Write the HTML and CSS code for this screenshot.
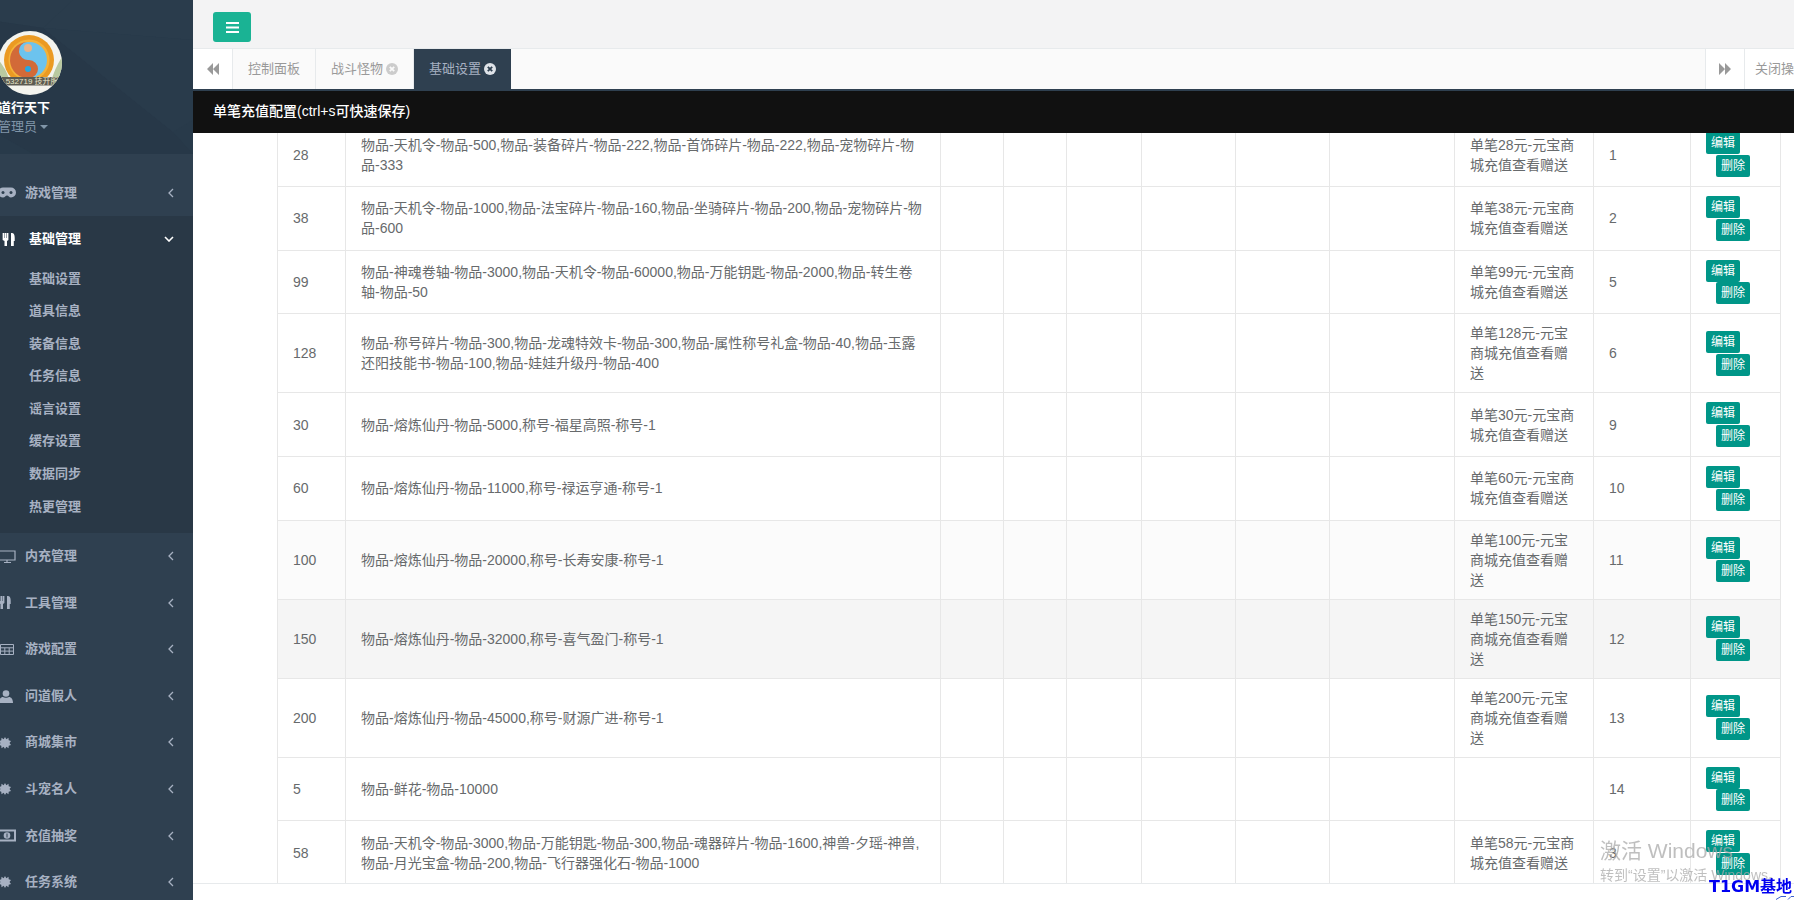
FILE: index.html
```html
<!DOCTYPE html>
<html lang="zh-CN">
<head>
    <meta charset="UTF-8">
    <meta name="viewport" content="width=device-width, initial-scale=1.0">
    <title>单笔充值配置</title>
    <link rel="stylesheet" href="styles.css">
</head>
<body>
    <svg class="icon-defs" width="0" height="0">
        <symbol id="chev-left" viewBox="0 0 6 10"><path d="M5 1 1 5l4 4" fill="none" stroke="currentColor" stroke-width="1.3"/></symbol>
        <symbol id="chev-down" viewBox="0 0 10 6"><path d="M1 1l4 4 4-4" fill="none" stroke="currentColor" stroke-width="1.6"/></symbol>
        <symbol id="burst" viewBox="0 0 12 12"><path d="M6 0l1.300 2.300L9.500 .8l.2 2.500 2.300.7-1.500 2 1.500 2-2.300.7-.2 2.500-2.200-1.500L6 12l-1.300-2.300-2.200 1.500-.2-2.500L0 8l1.500-2L0 4l2.300-.7.2-2.500 2.200 1.500z" fill="currentColor"/></symbol>
        <symbol id="cutlery" viewBox="0 0 18 14"><path d="M0 0h1.700v5.500h.5V0h1.800v5.500h.5V0h1.700v7.500L4.700 8.500V14H2V8.500L0 7.500zM9 0h1c2 0 3 2 3 5v3.500h-1V14H9z" fill="currentColor"/></symbol>
        <symbol id="close" viewBox="0 0 12 12"><circle cx="6" cy="6" r="6" fill="currentColor"/><path d="M3.800 3.800l4.400 4.400M8.200 3.800 3.800 8.200" stroke="var(--x)" stroke-width="1.800"/></symbol>
    </svg>

    <aside class="sidebar">
        <div class="sidebar-inner">
            <div class="nav-header">
                <svg class="header-bg" viewBox="0 0 220 154" preserveAspectRatio="none">
                    <rect width="220" height="154" fill="#283a4a"/>
                    <polygon points="0,0 100,0 70,28 0,18" fill="#2a3c4c"/>
                    <polygon points="70,28 100,0 220,0 220,40" fill="#2a3c4c"/>
                    <polygon points="70,28 200,132 220,154 60,154 0,120 0,18" fill="#273848"/>
                    <polygon points="70,28 220,40 220,120 200,132" fill="#293b4b"/>
                </svg>
                <svg class="avatar" viewBox="0 0 64 64">
                    <defs><clipPath id="avatar-clip"><circle cx="32" cy="32" r="32"/></clipPath></defs>
                    <g clip-path="url(#avatar-clip)">
                        <rect width="64" height="64" fill="#f4f4ee"/>
                        <path d="M0 28c6 8 10 14 12 24H0zM64 26c-5 8-9 16-11 26h11z" fill="#b9c9a0"/>
                        <circle cx="31" cy="29" r="25" fill="#eb9a22"/>
                        <circle cx="31" cy="29" r="20.500" fill="#f3b23a"/>
                        <circle cx="31" cy="29" r="18" fill="#6cc3ee"/>
                        <path d="M29 11a18 18 0 0 0 2 36 9 9 0 0 0 0-18 9 9 0 0 1-2-18z" fill="#d26a38"/>
                        <circle cx="30" cy="17" r="4" fill="#e8b48a"/>
                        <circle cx="30" cy="38" r="3" fill="#27a6e0"/>
                        <rect y="46" width="64" height="8.500" fill="#5c5b52"/>
                        <text class="avatar-text" x="1" y="53">0 532719 技开服</text>
                    </g>
                </svg>
                <div class="profile-name">道行天下</div>
                <div class="profile-role">管理员<span class="caret"></span></div>
            </div>

            <ul class="nav">
                <li class="nav-item">
                    <a><svg class="nav-icon" viewBox="0 0 18 12"><path d="M5 1h8a5 5 0 0 1 0 10c-2 0-2.500-2-4-2s-2 2-4 2A5 5 0 0 1 5 1z" fill="currentColor"/><circle cx="5" cy="6" r="1.500" fill="#2f4050"/><circle cx="13" cy="6" r="1.500" fill="#2f4050"/></svg><span class="nav-label">游戏管理</span><svg class="chev"><use href="#chev-left"/></svg></a>
                </li>
                <li class="nav-item active">
                    <a><svg class="nav-icon"><use href="#cutlery"/></svg><span class="nav-label">基础管理</span><svg class="chev chev-open"><use href="#chev-down"/></svg></a>
                    <ul class="subnav">
                        <li><a>基础设置</a></li>
                        <li><a>道具信息</a></li>
                        <li><a>装备信息</a></li>
                        <li><a>任务信息</a></li>
                        <li><a>谣言设置</a></li>
                        <li><a>缓存设置</a></li>
                        <li><a>数据同步</a></li>
                        <li><a>热更管理</a></li>
                    </ul>
                </li>
                <li class="nav-item">
                    <a><svg class="nav-icon" viewBox="0 0 18 13"><path d="M1 1h16v9H1zM6 12.500h7M9 10v2" fill="none" stroke="currentColor" stroke-width="1.200"/></svg><span class="nav-label">内充管理</span><svg class="chev"><use href="#chev-left"/></svg></a>
                </li>
                <li class="nav-item">
                    <a><svg class="nav-icon"><use href="#cutlery"/></svg><span class="nav-label">工具管理</span><svg class="chev"><use href="#chev-left"/></svg></a>
                </li>
                <li class="nav-item">
                    <a><svg class="nav-icon" viewBox="0 0 18 12"><path d="M2.500 1h13v10h-13zM2.500 4.300h13M2.500 7.600h13M6.800 4.300V11M11.200 4.300V11" fill="none" stroke="currentColor" stroke-width="1"/></svg><span class="nav-label">游戏配置</span><svg class="chev"><use href="#chev-left"/></svg></a>
                </li>
                <li class="nav-item">
                    <a><svg class="nav-icon" viewBox="0 0 18 13"><circle cx="8" cy="3.500" r="3.300" fill="currentColor"/><path d="M1 13c0-4 2-6 4-6 1 1 5 1 6 0 2 0 4 2 4 6z" fill="currentColor"/></svg><span class="nav-label">问道假人</span><svg class="chev"><use href="#chev-left"/></svg></a>
                </li>
                <li class="nav-item">
                    <a><svg class="nav-icon nav-burst"><use href="#burst"/></svg><span class="nav-label">商城集市</span><svg class="chev"><use href="#chev-left"/></svg></a>
                </li>
                <li class="nav-item">
                    <a><svg class="nav-icon nav-burst"><use href="#burst"/></svg><span class="nav-label">斗宠名人</span><svg class="chev"><use href="#chev-left"/></svg></a>
                </li>
                <li class="nav-item">
                    <a><svg class="nav-icon" viewBox="0 0 18 12"><path d="M1 1h16v10H1z" fill="none" stroke="currentColor" stroke-width="2"/><circle cx="9" cy="6" r="3.300" fill="currentColor"/><path d="M9 4v4" stroke="#2f4050"/></svg><span class="nav-label">充值抽奖</span><svg class="chev"><use href="#chev-left"/></svg></a>
                </li>
                <li class="nav-item">
                    <a><svg class="nav-icon nav-burst"><use href="#burst"/></svg><span class="nav-label">任务系统</span><svg class="chev"><use href="#chev-left"/></svg></a>
                </li>
            </ul>
        </div>
    </aside>

    <main class="page">
        <div class="topbar">
            <button class="toggle" type="button">
                <svg viewBox="0 0 13 11" width="13" height="11"><path d="M0 0h13v2H0zM0 4.500h13v2H0zM0 9h13v2H0z" fill="#fff"/></svg>
            </button>
        </div>

        <div class="tabs">
            <div class="tab-arrow tab-arrow-left"><svg viewBox="0 0 12 12" width="12" height="12"><path d="M6 0v12L0 6zM12 0v12L6 6z" fill="#999"/></svg></div>
            <div class="tab">控制面板</div>
            <div class="tab">战斗怪物<svg class="tab-close"><use href="#close"/></svg></div>
            <div class="tab tab-active">基础设置<svg class="tab-close"><use href="#close"/></svg></div>
            <div class="tabs-fill"></div>
            <div class="tab-arrow tab-arrow-right"><svg viewBox="0 0 12 12" width="12" height="12"><path d="M0 0v12l6-6zM6 0v12l6-6z" fill="#999"/></svg></div>
            <div class="tab-menu">关闭操作</div>
        </div>

        <div class="title-bar">单笔充值配置(ctrl+s可快速保存)</div>

        <div class="content">
            <table class="data-table">
                <colgroup>
                    <col class="col-amount"><col class="col-items"><col class="col-s"><col class="col-s">
                    <col class="col-m"><col class="col-l"><col class="col-l"><col class="col-xl">
                    <col class="col-desc"><col class="col-id"><col class="col-actions">
                </colgroup>
                <tbody>
                    <tr>
                        <td>28</td><td>物品-天机令-物品-500,物品-装备碎片-物品-222,物品-首饰碎片-物品-222,物品-宠物碎片-物品-333</td>
                        <td></td><td></td><td></td><td></td><td></td><td></td>
                        <td>单笔28元-元宝商城充值查看赠送</td><td>1</td>
                        <td><a class="btn">编辑</a><a class="btn btn-del">删除</a></td>
                    </tr>
                    <tr>
                        <td>38</td><td>物品-天机令-物品-1000,物品-法宝碎片-物品-160,物品-坐骑碎片-物品-200,物品-宠物碎片-物品-600</td>
                        <td></td><td></td><td></td><td></td><td></td><td></td>
                        <td>单笔38元-元宝商城充值查看赠送</td><td>2</td>
                        <td><a class="btn">编辑</a><a class="btn btn-del">删除</a></td>
                    </tr>
                    <tr>
                        <td>99</td><td>物品-神魂卷轴-物品-3000,物品-天机令-物品-60000,物品-万能钥匙-物品-2000,物品-转生卷轴-物品-50</td>
                        <td></td><td></td><td></td><td></td><td></td><td></td>
                        <td>单笔99元-元宝商城充值查看赠送</td><td>5</td>
                        <td><a class="btn">编辑</a><a class="btn btn-del">删除</a></td>
                    </tr>
                    <tr>
                        <td>128</td><td>物品-称号碎片-物品-300,物品-龙魂特效卡-物品-300,物品-属性称号礼盒-物品-40,物品-玉露还阳技能书-物品-100,物品-娃娃升级丹-物品-400</td>
                        <td></td><td></td><td></td><td></td><td></td><td></td>
                        <td>单笔128元-元宝商城充值查看赠送</td><td>6</td>
                        <td><a class="btn">编辑</a><a class="btn btn-del">删除</a></td>
                    </tr>
                    <tr>
                        <td>30</td><td>物品-熔炼仙丹-物品-5000,称号-福星高照-称号-1</td>
                        <td></td><td></td><td></td><td></td><td></td><td></td>
                        <td>单笔30元-元宝商城充值查看赠送</td><td>9</td>
                        <td><a class="btn">编辑</a><a class="btn btn-del">删除</a></td>
                    </tr>
                    <tr>
                        <td>60</td><td>物品-熔炼仙丹-物品-11000,称号-禄运亨通-称号-1</td>
                        <td></td><td></td><td></td><td></td><td></td><td></td>
                        <td>单笔60元-元宝商城充值查看赠送</td><td>10</td>
                        <td><a class="btn">编辑</a><a class="btn btn-del">删除</a></td>
                    </tr>
                    <tr class="row-striped">
                        <td>100</td><td>物品-熔炼仙丹-物品-20000,称号-长寿安康-称号-1</td>
                        <td></td><td></td><td></td><td></td><td></td><td></td>
                        <td>单笔100元-元宝商城充值查看赠送</td><td>11</td>
                        <td><a class="btn">编辑</a><a class="btn btn-del">删除</a></td>
                    </tr>
                    <tr class="row-hover">
                        <td>150</td><td>物品-熔炼仙丹-物品-32000,称号-喜气盈门-称号-1</td>
                        <td></td><td></td><td></td><td></td><td></td><td></td>
                        <td>单笔150元-元宝商城充值查看赠送</td><td>12</td>
                        <td><a class="btn">编辑</a><a class="btn btn-del">删除</a></td>
                    </tr>
                    <tr>
                        <td>200</td><td>物品-熔炼仙丹-物品-45000,称号-财源广进-称号-1</td>
                        <td></td><td></td><td></td><td></td><td></td><td></td>
                        <td>单笔200元-元宝商城充值查看赠送</td><td>13</td>
                        <td><a class="btn">编辑</a><a class="btn btn-del">删除</a></td>
                    </tr>
                    <tr>
                        <td>5</td><td>物品-鲜花-物品-10000</td>
                        <td></td><td></td><td></td><td></td><td></td><td></td>
                        <td></td><td>14</td>
                        <td><a class="btn">编辑</a><a class="btn btn-del">删除</a></td>
                    </tr>
                    <tr>
                        <td>58</td><td>物品-天机令-物品-3000,物品-万能钥匙-物品-300,物品-魂器碎片-物品-1600,神兽-夕瑶-神兽,物品-月光宝盒-物品-200,物品-飞行器强化石-物品-1000</td>
                        <td></td><td></td><td></td><td></td><td></td><td></td>
                        <td>单笔58元-元宝商城充值查看赠送</td><td>3</td>
                        <td><a class="btn">编辑</a><a class="btn btn-del">删除</a></td>
                    </tr>
                </tbody>
            </table>
        </div>

        <div class="footer"></div>
    </main>

    <div class="watermark">
        <div class="watermark-title">激活 Windows</div>
        <div class="watermark-sub">转到“设置”以激活 Windows。</div>
    </div>
    <div class="site-mark">T1GM基地</div>
    <svg class="site-mark-tail" viewBox="0 0 18 4" width="18" height="4"><path d="M0 3.500 5 .5h5M12 3.500l3-3h3" fill="none" stroke="#3a5fd0" stroke-width="1"/></svg>
</body>
</html>
```

FILE: styles.css
```css
* {
    box-sizing: border-box;
}
html, body {
    height: 100%;
}
body {
    display: flex;
    margin: 0;
    overflow: hidden;
    font-family: "Liberation Sans", "Noto Sans CJK SC", sans-serif;
    font-size: 13px;
    line-height: 1.42857;
    color: #676a6c;
    background-color: #fff;
}
ul {
    margin: 0;
    padding: 0;
    list-style: none;
}
.icon-defs {
    position: absolute;
}

/* sidebar */
.sidebar {
    flex: 0 0 193px;
    height: 100%;
    overflow: hidden;
    background-color: #2f4050;
}
.sidebar-inner {
    width: 220px;
    margin-left: -27px;
}
.nav-header {
    position: relative;
    height: 154px;
    padding: 31px 25px 0;
}
.header-bg {
    position: absolute;
    top: 0;
    left: 0;
    width: 100%;
    height: 100%;
}
.avatar {
    position: relative;
    display: block;
    width: 64px;
    height: 64px;
}
.avatar-text {
    font-size: 8px;
    fill: #e9e6c8;
}
.profile-name {
    position: relative;
    margin-top: 4px;
    font-weight: 600;
    color: #fff;
}
.profile-role {
    position: relative;
    color: #8095a8;
}
.caret {
    display: inline-block;
    margin-left: 3px;
    vertical-align: middle;
    border-top: 4px solid #8095a8;
    border-left: 4px solid transparent;
    border-right: 4px solid transparent;
}
.nav {
    padding-top: 15.5px;
}
.nav-item > a {
    position: relative;
    display: flex;
    align-items: center;
    padding: 14px 20px 14px 25px;
    font-weight: 600;
    color: #a7b1c2;
}
.nav-icon {
    flex: none;
    width: 18px;
    height: 13px;
    margin-right: 9px;
}
.nav-burst {
    width: 12px;
    height: 12px;
    margin-left: 1px;
    margin-right: 14px;
}
.chev {
    position: absolute;
    top: 18px;
    left: 195px;
    width: 6px;
    height: 10px;
}
.chev-open {
    left: 187px;
    top: 20px;
    width: 10px;
    height: 6px;
}
.nav-item.active {
    border-left: 4px solid #293846;
    background-color: #293846;
}
.nav-item.active > a {
    color: #fff;
}
.subnav {
    padding-bottom: 10px;
}
.subnav a {
    display: block;
    padding: 7px 10px 7px 52px;
    font-weight: 600;
    color: #a7b1c2;
}

/* top bar and tabs */
.page {
    flex: 1;
    min-width: 0;
    display: flex;
    flex-direction: column;
}
.topbar {
    flex: 0 0 48px;
    padding: 12px 0 0 20px;
    background-color: #f3f3f4;
}
.toggle {
    display: flex;
    align-items: center;
    justify-content: center;
    width: 38px;
    height: 30px;
    padding: 0;
    background-color: #1ab394;
    border: none;
    border-radius: 3px;
}
.tabs {
    flex: 0 0 41px;
    display: flex;
    overflow: hidden;
    background-color: #fafafa;
    border-top: 1px solid #e7eaec;
}
.tab-arrow {
    flex: 0 0 40px;
    display: flex;
    align-items: center;
    justify-content: center;
    background-color: #fff;
}
.tab-arrow-left {
    border-right: 1px solid #e7eaec;
}
.tab-arrow-right {
    border-left: 1px solid #e7eaec;
    border-right: 1px solid #e7eaec;
}
.tab {
    display: flex;
    align-items: center;
    padding: 0 15px;
    color: #999;
    border-right: 1px solid #e7eaec;
    --x: #fafafa;
}
.tab-active {
    color: #a7b1c2;
    background-color: #2f4050;
    border-right: none;
    --x: #2f4050;
}
.tab-close {
    width: 12px;
    height: 12px;
    margin-left: 3px;
    color: #ccc;
}
.tab-active .tab-close {
    color: #dfe3e8;
}
.tabs-fill {
    flex: 1;
}
.tab-menu {
    flex: 0 0 auto;
    width: 49px;
    padding-left: 10px;
    line-height: 40px;
    white-space: nowrap;
    color: #999;
    background-color: #fff;
}
.title-bar {
    flex: 0 0 44px;
    padding: 11px 0 0 20px;
    font-size: 14px;
    font-weight: 500;
    color: #fff;
    background-color: #111;
    border-top: 2px solid #2f4050;
}

/* table */
.content {
    flex: 1;
    min-height: 0;
    overflow: hidden;
}
.data-table {
    width: 1503px;
    margin: -10.67px 0 0 84px;
    table-layout: fixed;
    border-collapse: collapse;
}
.col-amount { width: 68px; }
.col-items { width: 595px; }
.col-s { width: 63px; }
.col-m { width: 75px; }
.col-l { width: 94px; }
.col-xl { width: 125px; }
.col-desc { width: 139px; }
.col-id { width: 97px; }
.col-actions { width: 90px; }
.data-table td {
    padding: 9px 15px;
    font-size: 14px;
    line-height: 20px;
    vertical-align: middle;
    border: 1px solid #e7e7e7;
}
.row-striped td {
    background-color: #fbfbfb;
}
.row-hover td {
    background-color: #f5f5f5;
}
.btn {
    display: block;
    width: 34px;
    height: 22px;
    font-size: 12px;
    line-height: 22px;
    text-align: center;
    color: #fff;
    background-color: #009688;
    border-radius: 2px;
}
.btn-del {
    margin: 0.67px 0 0 10px;
}
.footer {
    flex: 0 0 17px;
    background-color: #fff;
    border-top: 1px solid #e7eaec;
}

/* overlays on top of the page */
.watermark {
    position: fixed;
    top: 837px;
    left: 1600px;
    white-space: nowrap;
    pointer-events: none;
    color: rgba(170, 170, 170, 0.75);
}
.watermark-title {
    font-size: 21px;
    line-height: 28px;
}
.watermark-sub {
    margin-top: 1px;
    font-size: 14px;
    line-height: 18px;
}
.site-mark {
    position: fixed;
    top: 877px;
    left: 1709px;
    font-family: "DejaVu Sans", "Noto Sans CJK SC", sans-serif;
    font-size: 16px;
    font-weight: 700;
    line-height: 20px;
    color: #0000f0;
}
.site-mark-tail {
    position: fixed;
    top: 896px;
    left: 1776px;
}
```
